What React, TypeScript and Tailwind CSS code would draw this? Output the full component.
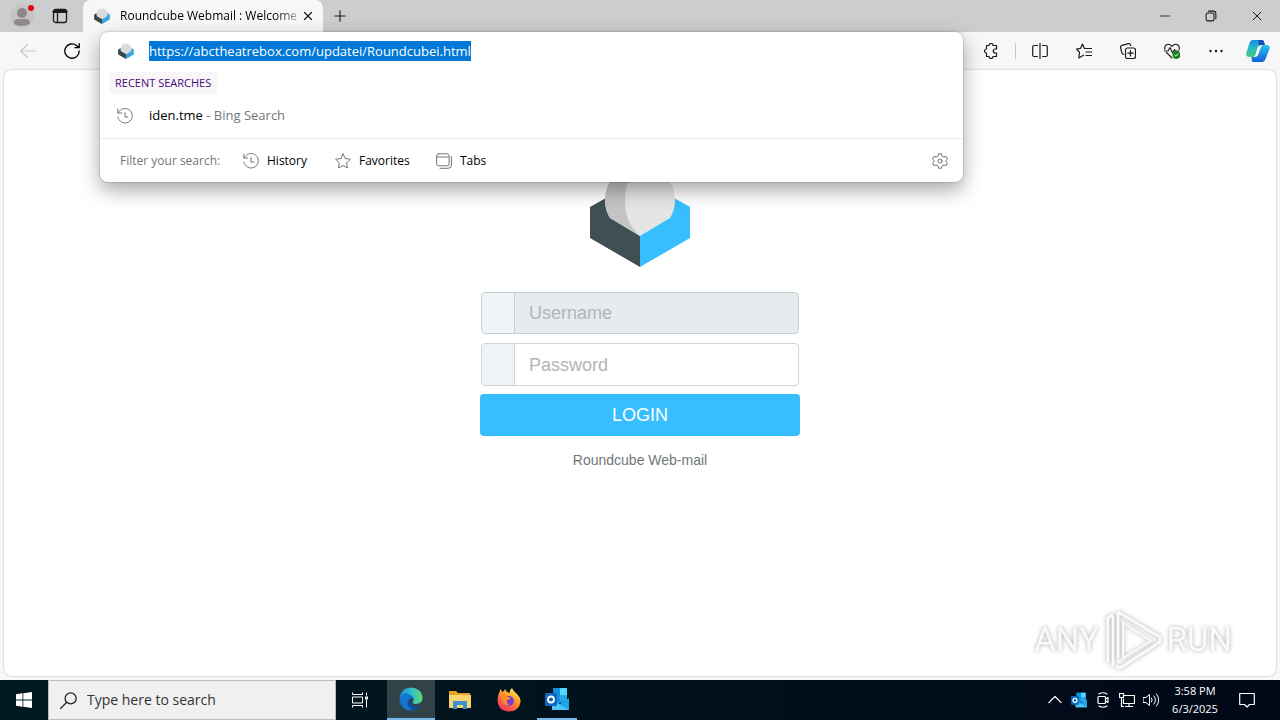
import type { ReactNode } from "react";
import { Minus, X, Plus } from "lucide-react";

function CubeIcon() {
  return (
    <svg viewBox="0 0 100 102" className="h-4 w-4 shrink-0">
      <path d="M0 42 50 14V102L0 73Z" fill="#37474a" />
      <path d="M100 42 50 14V102L100 73Z" fill="#37a9e0" />
      <path d="M50 71 18 52A35 35 0 1 1 82 52Z" fill="#d9dadb" />
    </svg>
  );
}

function Logo() {
  return (
    <svg viewBox="0 0 100 102" className="h-[102px] w-[100px]" role="img" aria-label="Roundcube">
      <path d="M0 42 16 33 50 71V102L0 73Z" fill="#404f54" />
      <path d="M100 42 84 33 50 71V102L100 73Z" fill="#37beff" />
      <path d="M50 71 20 53Q15 45 15 35A35 35 0 0 1 85 35Q85 45 80 53Z" fill="#e5e5e5" />
      <path d="M50 71 20 53Q15 45 15 35A35 35 0 0 1 50 0Q35 12 35 36 35 58 50 71Z" fill="#c4c4c4" />
    </svg>
  );
}

function Line({ children, className = "h-4 w-4" }: { children: ReactNode; className?: string }) {
  return (
    <svg viewBox="0 0 16 16" className={className} fill="none" stroke="currentColor" strokeWidth="1" strokeLinecap="round" strokeLinejoin="round">
      {children}
    </svg>
  );
}

function HistoryIcon() {
  return (
    <Line>
      <path d="M.8 1v4h4M1.3 4.8A7.3 7.3 0 1 1 .8 9M8 4.5V9h3" />
    </Line>
  );
}

function ToolbarIcons() {
  return (
    <div className="flex items-center text-[#1b1b1b]">
      <button aria-label="Extensions" className="flex w-8 justify-center">
        <Line>
          <path d="M3.500 2.500H6a2 2 0 0 1 4 0H13.500V6H12.300a1.900 1.900 0 0 0 0 4H13.500V13.500H10a2 2 0 0 1-4 0H3.500V10a2 2 0 0 1 0-4Z" strokeWidth="1.2" />
        </Line>
      </button>
      <span className="ml-2 h-4 w-px bg-[#c9c9c9]" />
      <button aria-label="Split screen" className="ml-2 flex w-8 justify-center">
        <Line>
          <path d="M8 .5V15.500M5.500 2.500H2Q.7 2.500.7 4V12Q.7 13.500 2 13.500H5.500M10.500 2.500H14Q15.300 2.500 15.300 4V12Q15.300 13.500 14 13.500H10.500" strokeWidth="1.2" />
        </Line>
      </button>
      <button aria-label="Favorites" className="ml-3 flex w-8 justify-center">
        <Line>
          <path d="M9.500 5.500H15.500M10 9H15.500M10 12.500H15.500M8.500 5.500 6.500 1 4.600 5.300.5 6 3.500 9.200 2.800 15 7.500 12.200" strokeWidth="1.2" />
        </Line>
      </button>
      <button aria-label="Collections" className="ml-3 flex w-8 justify-center">
        <Line>
          <path d="M3.500 11.500Q2 11 1.600 9L.6 4.500Q.4 2.800 2 2.300L8.500.7Q10.200.5 10.800 2.500" strokeWidth="1.2" />
          <rect x="5.500" y="5" width="10" height="10.500" rx="2" strokeWidth="1.2" />
          <path d="M10.500 7.500V13M7.800 10.200H13.200" strokeWidth="1.2" />
        </Line>
      </button>
      <button aria-label="Browser essentials" className="ml-3 flex w-8 justify-center">
        <Line>
          <path d="M1 6.500Q0 3 2.800 1.500 5.500.5 8 3.300 10.500.5 13.200 1.500 16 3 15 6.500M2.500 9.500 8 15M.5 8H4L6 4.500 8.500 10 10.500 6.500 11.500 8H15" strokeWidth="1.1" />
          <circle cx="12.500" cy="12" r="3.900" fill="#138013" stroke="none" />
          <path d="m10.800 12 1.200 1.200 2.200-2.400" stroke="#fff" strokeWidth=".9" />
        </Line>
      </button>
      <button aria-label="Settings and more" className="ml-3 flex w-8 justify-center">
        <svg viewBox="0 0 16 16" className="h-4 w-4" fill="currentColor">
          <circle cx="2.500" cy="8" r="1.200" />
          <circle cx="8" cy="8" r="1.200" />
          <circle cx="13.500" cy="8" r="1.200" />
        </svg>
      </button>
      <button aria-label="Copilot" className="ml-[10px] mr-[6px] flex w-8 justify-center">
        <svg viewBox="0 0 24 22" className="h-[22px] w-6">
          <defs>
            <linearGradient id="copA" x1="0" y1="0" x2="0" y2="1">
              <stop offset="0" stopColor="#1689e8" />
              <stop offset=".4" stopColor="#22b8c8" />
              <stop offset="1" stopColor="#48c97c" />
            </linearGradient>
            <linearGradient id="copB" x1="0" y1="0" x2="0" y2="1">
              <stop offset="0" stopColor="#27c3ef" />
              <stop offset="1" stopColor="#1760d8" />
            </linearGradient>
          </defs>
          <path d="M7 22H16Q18.500 22 19.500 19L23.500 9Q24.500 5 20.500 5H17.500Q15.500 5 14.500 8L12 15Q11 17 9 17H5.500Q5.500 22 7 22Z" fill="url(#copB)" />
          <path d="M7 0H16Q18.200 0 18.700 5H15Q12.500 5 11.500 8L9.500 15Q9 17 6.500 17H3.500Q-.5 17 .3 13L3.500 3Q4.500 0 7 0Z" fill="url(#copA)" />
          <path d="M12 0H16Q18.200 0 18.700 5H15Q13.800 5 13 5.800 13.500 2 12 0Z" fill="#174fb8" />
          <path d="M12.300 7H14.700L11.500 15.500H9.300Z" fill="#fff" />
        </svg>
      </button>
    </div>
  );
}

function TitleBar() {
  return (
    <header className="flex h-8 items-center bg-[#cdcdcd] text-[#1b1b1b]">
      <button aria-label="Profile" className="ml-2 flex w-7 justify-center">
        <svg viewBox="0 0 28 28" className="h-7 w-7">
          <circle cx="14" cy="14" r="12" fill="#c6c4c3" />
          <circle cx="14" cy="11" r="5" fill="#8d8988" />
          <path d="M6 22Q6 17 10 17H18Q22 17 22 22 14 26 6 22Z" fill="#8d8988" />
          <circle cx="23" cy="6" r="3" fill="#e30613" />
        </svg>
      </button>
      <button aria-label="Tab actions" className="ml-4">
        <Line>
          <rect x="1.500" y="1.500" width="13" height="13" rx="2" strokeWidth="1.3" />
          <path d="M2 3.500H14" strokeWidth="3" />
          <path d="M5.500 4V14" strokeWidth="1.3" />
        </Line>
      </button>
      <div className="ml-[15px] flex h-8 w-60 items-center rounded-t-lg bg-[#f7f7f7] pl-[11px] pr-2">
        <CubeIcon />
        <span className="ml-[10px] whitespace-nowrap bg-gradient-to-r from-black from-85% to-[#aaa] bg-clip-text text-xs text-transparent">
          Roundcube Webmail : Welcome
        </span>
        <button aria-label="Close tab" className="ml-auto">
          <X className="h-[14px] w-[14px]" strokeWidth={2} />
        </button>
      </div>
      <button aria-label="New tab" className="ml-2">
        <Plus className="h-[18px] w-[18px]" strokeWidth={1.5} />
      </button>
      <div className="ml-auto flex">
        <button aria-label="Minimize" className="flex w-[46px] justify-center">
          <Minus className="h-4 w-4" strokeWidth={1.3} />
        </button>
        <button aria-label="Restore" className="flex w-[46px] items-center justify-center">
          <Line className="h-3 w-3">
            <rect x="1.500" y="4" width="10.500" height="10.500" rx="2" strokeWidth="1.4" />
            <path d="M4.500 1.500H11Q14.500 1.500 14.500 5V11.500" strokeWidth="1.4" />
          </Line>
        </button>
        <button aria-label="Close" className="flex w-[46px] justify-center">
          <X className="h-4 w-4" strokeWidth={1.5} />
        </button>
      </div>
    </header>
  );
}

function AddressPopup() {
  return (
    <div className="absolute left-[100px] right-[317px] top-0 z-10 rounded-lg bg-white shadow-[0_0_2px_rgba(0,0,0,0.35),0_8px_20px_rgba(0,0,0,0.35)]">
      <label className="flex h-[38px] items-center pl-[18px]">
        <CubeIcon />
        <input
          aria-label="Address"
          defaultValue="https://abctheatrebox.com/updatei/Roundcubei.html"
          className="ml-[15px] h-5 field-sizing-content bg-[#0078d7] text-[13px] text-white outline-none"
        />
      </label>
      <h2 className="ml-[9px] mt-[2px] flex h-[22px] w-[108px] items-center bg-[#f8f6f9] pl-[6px] text-[11px] text-[#4b0a77]">
        RECENT SEARCHES
      </h2>
      <a href="#iden" className="flex h-11 items-center pl-[17px] text-[13px] text-[#767676]">
        <HistoryIcon />
        <span className="ml-4">
          <span className="text-black">iden.tme</span> - Bing Search
        </span>
      </a>
      <div className="flex h-11 items-center border-t border-[#ebebeb] pl-5 pr-[15px] text-xs">
        <span className="w-[123px] text-[#767676]">Filter your search:</span>
        <button className="flex w-[92px] items-center gap-2">
          <span className="text-[#767676]"><HistoryIcon /></span>
          History
        </button>
        <button className="flex w-[101px] items-center gap-2">
          <span className="text-[#767676]">
            <Line><path d="m8 .8 2.200 4.700 5.200.7-3.800 3.600.9 5.200L8 12.500 3.500 15l.9-5.200L.6 6.200l5.200-.7Z" /></Line>
          </span>
          Favorites
        </button>
        <button className="flex items-center gap-2">
          <span className="text-[#767676]">
            <Line>
              <rect x=".6" y=".8" width="12.500" height="12" rx="2" />
              <path d="M.6 4H13M15.400 3.500V12Q15.400 15.300 12 15.300H4" />
            </Line>
          </span>
          Tabs
        </button>
        <button aria-label="Search settings" className="ml-auto text-[#707070]">
          <Line>
            <path d="M6.500.8H9.500L10 3 12 4.100 14 3.300 15.500 6 14 7.400V8.600L15.500 10 14 12.700 12 11.900 10 13 9.500 15.200H6.500L6 13 4 11.900 2 12.700.5 10 2 8.600V7.400L.5 6 2 3.300 4 4.100 6 3Z" />
            <circle cx="8" cy="8" r="2" />
          </Line>
        </button>
      </div>
    </div>
  );
}

function LoginForm() {
  return (
    <form className="flex w-80 flex-col items-center pt-[95px] font-['Liberation_Sans',Arial,sans-serif]">
      <Logo />
      <div className="mt-[25px] flex w-full flex-col px-px text-lg">
        <label className="flex h-[42px] overflow-hidden rounded border border-[#c5d0d6] bg-[#e7ebee]">
          <span className="w-[33px] border-r border-[#c5d0d6] bg-[#f0f4f7]" />
          <input aria-label="Username" placeholder="Username" className="min-w-0 flex-1 px-[14px] outline-none placeholder:text-[#b3b5b7]" />
        </label>
        <label className="mt-[9px] flex h-[43px] overflow-hidden rounded border border-[#ced4da] bg-white">
          <span className="w-[33px] border-r border-[#ced4da] bg-[#f0f3f5]" />
          <input aria-label="Password" type="password" placeholder="Password" className="min-w-0 flex-1 px-[14px] outline-none placeholder:text-[#b3b5b7]" />
        </label>
      </div>
      <button type="button" className="mt-2 h-[42px] w-full rounded bg-[#37beff] text-lg text-white">
        LOGIN
      </button>
      <p className="mt-[14px] text-sm text-[#737677]">Roundcube Web-mail</p>
    </form>
  );
}

function Watermark() {
  return (
    <div className="absolute bottom-1 right-11 flex items-center gap-1 font-['Roboto',sans-serif] text-[33px] text-[#fafafa] drop-shadow-[0_0_2px_#aaa]">
      <span>ANY</span>
      <svg viewBox="0 0 60 64" className="h-16 w-[60px]" fill="none" stroke="#fafafa" strokeWidth="3">
        <path d="M5 54V10L10 6M10 58V8" />
        <path d="M15 4 57 29V34L17 60 13 58M15 4V50" />
        <path d="M20 15V50L48 33Z" strokeWidth="2" />
      </svg>
      <span>RUN</span>
    </div>
  );
}

function OutlookIcon({ className }: { className: string }) {
  return (
    <svg viewBox="0 0 24 24" className={className}>
      <path d="M8 1H22V16H8Z" fill="#1490df" />
      <path d="M15 1H22V8H15Z" fill="#50d9ff" />
      <path d="M15 8H22V14H15Z" fill="#28a8ea" />
      <path d="M7 12 15 17 24 11V23H7Z" fill="#1fa6e6" />
      <path d="M7 13 24 23H7Z" fill="#50c6f5" />
      <rect y="6" width="12" height="13" rx="1" fill="#0a68bd" />
      <circle cx="6" cy="12.500" r="3" fill="none" stroke="#fff" strokeWidth="1.800" />
    </svg>
  );
}

function TaskBar() {
  return (
    <footer className="flex h-10 items-center bg-gradient-to-r from-[#001a20] to-[#010818] text-white">
      <button aria-label="Start" className="flex w-12 justify-center">
        <svg viewBox="0 0 16 16" className="h-4 w-4" fill="#fff">
          <path d="M0 2.200 6.500 1.300V7.600H0ZM7.300 1.200 16 0V7.600H7.300ZM0 8.400H6.500V14.700L0 13.800ZM7.300 8.400H16V16L7.300 14.800Z" />
        </svg>
      </button>
      <label className="flex h-10 w-72 items-center border border-[#bcbcbc] bg-[#f0f0f0] pl-[11px] text-[#222]">
        <Line className="h-[17px] w-[17px]">
          <circle cx="10" cy="6" r="5.200" strokeWidth="1.200" />
          <path d="M6.300 9.700.5 15.500" strokeWidth="1.200" />
        </Line>
        <input aria-label="Search" placeholder="Type here to search" className="ml-[10px] min-w-0 flex-1 text-sm outline-none placeholder:text-[#333]" />
      </label>
      <button aria-label="Task view" className="mr-[3px] flex w-12 justify-center">
        <Line>
          <path d="M.5.500V2.500H10.500V.500M.5 15.500V13.500H10.500V15.500M.5 5H10.500V11H.5ZM14.500.500V3.500M14.500 8V15.500" strokeLinecap="butt" />
          <path d="M13 4.500H16V7.500H13Z" fill="#fff" stroke="none" />
        </Line>
      </button>
      <button aria-label="Edge" className="flex h-10 w-12 items-center justify-center border-b-2 border-[#76b9ed] bg-[#324249]">
        <svg viewBox="0 0 24 24" className="h-6 w-6">
          <defs>
            <linearGradient id="edgeTop" x1="0" y1="0" x2="1" y2="0">
              <stop offset="0" stopColor="#1a8fdc" />
              <stop offset=".6" stopColor="#35c4c4" />
              <stop offset="1" stopColor="#5ade64" />
            </linearGradient>
          </defs>
          <path d="M.5 11Q1 6 7 6 14 6 14.500 12 12 10 10 13 8 19 14 23.300 10 24 6 22 0 18 .5 11Z" fill="#1276cf" />
          <path d="M.5 11Q2 .5 12 .5 22 1 23.500 10 24 16 17.500 17 13 17 13.500 15 15.500 13 14 10 11 6 6 6.500 2 7.500 .5 11Z" fill="url(#edgeTop)" />
          <path d="M9 12Q7 20 14 23.300 19 22.500 22 18 17 20.500 12.500 17.500 9.500 15 9 12Z" fill="#0d4f9e" />
        </svg>
      </button>
      <button aria-label="File Explorer" className="ml-px flex h-10 w-12 items-center justify-center">
        <svg viewBox="0 0 22 20" className="h-5 w-[22px]">
          <path d="M0 1H7L9 3H21V7H0Z" fill="#e5a520" />
          <path d="M0 5H22V18H0Z" fill="#f9d571" />
          <path d="M4 19V12Q4 11 5 11H17Q18 11 18 12V19H14V15H8V19Z" fill="#3f93cd" />
        </svg>
      </button>
      <button aria-label="Firefox" className="ml-px flex h-10 w-12 items-center justify-center">
        <svg viewBox="0 0 24 24" className="h-6 w-6">
          <defs>
            <linearGradient id="fox" x1=".8" y1="0" x2=".2" y2="1">
              <stop offset="0" stopColor="#fff34f" />
              <stop offset=".45" stopColor="#ff9128" />
              <stop offset="1" stopColor="#f0246b" />
            </linearGradient>
          </defs>
          <path d="M2 5Q3 2 4 1L5 4 7 3 8 1 10 4 13 5Q12 2 15 0 16 3 20 6 24 10 23.500 14 22 23.500 12 23.500 1 23 .5 12 .5 8 2 5Z" fill="url(#fox)" />
          <circle cx="12" cy="13" r="5" fill="#7540cf" />
          <path d="M4 8Q8 6 11 9L14 10Q12 12 10 12 9 16 13 16 8 19 6 14Z" fill="#ff8b25" />
        </svg>
      </button>
      <button aria-label="Outlook" className="ml-1 flex h-10 w-10 items-center justify-center border-b-2 border-[#76b9ed]">
        <OutlookIcon className="h-6 w-6" />
      </button>

      {/* tray */}
      <div className="ml-auto flex h-10 items-center">
        <button aria-label="Show hidden icons">
          <Line className="h-[14px] w-[14px]"><path d="m1 11 7-7 7 7" strokeWidth="1.400" /></Line>
        </button>
        <span className="ml-[9px]"><OutlookIcon className="h-4 w-4" /></span>
        <span className="ml-2">
          <Line>
            <rect x="3" y="4.500" width="7.500" height="7" rx="1" strokeWidth="1.200" />
            <path d="m10.500 7 2.500-1.500V10.500L10.500 9M4 2Q8-.5 12 2M4 14Q8 16.500 12 14" strokeWidth="1.200" />
          </Line>
        </span>
        <span className="ml-2">
          <Line>
            <path d="M5 3.500H15.500V11.500H4.500V7M10 11.500V14.500M6.500 14.500H13.500M.5 1.500H4.500V5.500H.5ZM2.500 5.500V14.500H4.500" strokeWidth="1.200" />
          </Line>
        </span>
        <span className="ml-2">
          <Line>
            <path d="M.5 5.500H3L6.500 2.500V13.500L3 10.500H.5ZM8.500 6Q10 8 8.500 10M11 4Q14 8 11 12M13.500 2Q18 8 13.500 14" />
          </Line>
        </span>
        <time className="ml-2 w-14 whitespace-nowrap text-center text-[11px] leading-[18px]">
          <span className="block">3:58 PM</span>
          <span className="block">6/3/2025</span>
        </time>
        <button aria-label="Notifications" className="ml-4 mr-[25px]">
          <Line><path d="M.7 1.500H15.300V12.500H10.500L8 15 5.500 12.500H.7Z" strokeWidth="1.200" /></Line>
        </button>
      </div>
    </footer>
  );
}

export default function App() {
  return (
    <div className="flex min-h-screen flex-col overflow-hidden bg-[#f7f7f7] font-['Open_Sans','Noto_Sans',sans-serif]">
      <TitleBar />
      <div className="relative flex flex-1 flex-col">
        <nav className="flex h-[38px] items-center justify-between">
          <div className="flex items-center">
            <button aria-label="Back" className="ml-5 text-[#c8c8c8]">
              <Line><path d="M15.500 8H.700M7.500 1.500.700 8 7.500 14.500" strokeWidth="1.200" /></Line>
            </button>
            <button aria-label="Refresh" className="ml-7">
              <Line><path d="M15.200 8A7.200 7.200 0 1 1 12.500 2.400L15 4.500M15.200.700V4.700H11" strokeWidth="1.300" /></Line>
            </button>
          </div>
          <ToolbarIcons />
        </nav>
        <AddressPopup />
        <main className="relative mx-1 mb-1 flex flex-1 justify-center rounded-lg bg-white shadow-[0_0_2px_rgba(0,0,0,0.3)]">
          <LoginForm />
          <Watermark />
        </main>
      </div>
      <TaskBar />
    </div>
  );
}
